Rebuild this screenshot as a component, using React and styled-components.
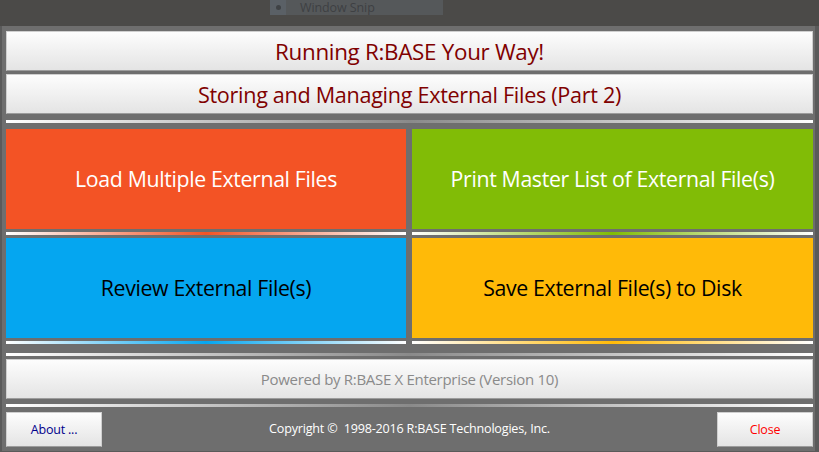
import React from "react";
import styled, { createGlobalStyle } from "styled-components";

const Global = createGlobalStyle`
  html, body {
    margin: 0;
    padding: 0;
    background: #6e6e6e;
    font-family: "Open Sans", "Noto Sans", sans-serif;
  }
`;

const Window = styled.div`
  position: relative;
  width: 819px;
  height: 452px;
  background: #6e6e6e;
  box-sizing: border-box;
  display: flex;
  flex-direction: column;
  overflow: hidden;
`;

const TitleStrip = styled.div`
  height: 26px;
  flex: none;
  background: #4b4a48;
`;

const GhostTip = styled.div`
  position: absolute;
  left: 270px;
  top: 0;
  width: 173px;
  height: 15px;
  background: #55585a;
  display: flex;
  align-items: center;
  gap: 14px;
  font-size: 12.5px;
  color: #3e4043;
  padding-left: 8px;
  box-sizing: border-box;
  letter-spacing: -0.1px;
`;

const GhostIcon = styled.span`
  width: 16px;
  height: 15px;
  margin-left: -8px;
  background: #5a6066;
  display: flex;
  align-items: center;
  justify-content: center;

  &::after {
    content: "";
    width: 5px;
    height: 5px;
    border-radius: 50%;
    background: #3f4245;
  }
`;

const Body = styled.div`
  flex: 1;
  display: flex;
  flex-direction: column;
  padding: 5px 0 0 0;
  border-left: 2px solid #5a5a5a;
  border-right: 4px solid #5a5a5a;
  border-bottom: 1px solid #5a5a5a;
  box-sizing: border-box;
`;

const Inner = styled.div`
  padding: 0 2px 0 4px;
  display: flex;
  flex-direction: column;
`;

const Bar = styled.div`
  height: 38px;
  display: flex;
  align-items: center;
  justify-content: center;
  background: linear-gradient(#fdfdfd, #e4e4e4);
  border: 1px solid #cfcfcf;
  border-bottom-color: #9c9c9c;
  font-size: ${(p) => p.$size || 21.6}px;
  color: ${(p) => p.$color || "#800000"};
  margin-top: ${(p) => p.$top || 0}px;
  letter-spacing: ${(p) => p.$ls || "-0.3px"};
`;

const Rule = styled.div`
  height: ${(p) => p.$h || 3}px;
  margin-top: ${(p) => p.$top || 0}px;
  background: linear-gradient(
    to right,
    #ffffff 0%,
    ${(p) => p.$mid || "#8a8a8a"} 50%,
    #ffffff 100%
  );
`;

const Grid = styled.div`
  display: grid;
  grid-template-columns: 400px 401px;
  column-gap: 6px;
  margin-top: 6px;
`;

const Cell = styled.div`
  display: flex;
  flex-direction: column;
  margin-bottom: 3px;
`;

const Tile = styled.div`
  height: 100px;
  background: ${(p) => p.$bg};
  color: ${(p) => p.$fg};
  display: flex;
  align-items: center;
  justify-content: center;
  padding-bottom: 2px;
  box-sizing: border-box;
  font-size: 21.3px;
  letter-spacing: -0.35px;
`;

const Footer = styled.div`
  display: flex;
  align-items: center;
  justify-content: space-between;
  margin-top: 5px;
`;

const SmallButton = styled.div`
  width: 94px;
  height: 33px;
  display: flex;
  align-items: center;
  justify-content: center;
  background: linear-gradient(#fdfdfd, #e4e4e4);
  border: 1px solid #cfcfcf;
  border-bottom-color: #9c9c9c;
  font-size: 12.5px;
  letter-spacing: -0.2px;
  color: ${(p) => p.$color};
`;

const Copyright = styled.div`
  color: #ffffff;
  font-size: 12.6px;
  letter-spacing: -0.2px;
  padding-bottom: 3px;
`;

const tiles = [
  { label: "Load Multiple External Files", bg: "#f35325", fg: "#ffffff" },
  { label: "Print Master List of External File(s)", bg: "#81bc06", fg: "#ffffff" },
  { label: "Review External File(s)", bg: "#05a6f0", fg: "#000000" },
  { label: "Save External File(s) to Disk", bg: "#ffba08", fg: "#000000" },
];

export default function App() {
  return (
    <>
      <Global />
      <Window>
        <TitleStrip />
        <GhostTip>
          <GhostIcon />
          Window Snip
        </GhostTip>
        <Body>
          <Inner>
            <Bar $size={22.4}>Running R:BASE Your Way!</Bar>
            <Bar $top={3}>Storing and Managing External Files (Part 2)</Bar>
            <Rule $top={6} />
            <Grid>
              {tiles.map((t) => (
                <Cell key={t.label}>
                  <Tile $bg={t.bg} $fg={t.fg}>
                    {t.label}
                  </Tile>
                  <Rule $top={3} $mid={t.bg} />
                </Cell>
              ))}
            </Grid>
            <Rule $top={6} />
            <Bar $top={3} $size={15} $color="#8a8a8a" $ls="-0.3px">
              Powered by R:BASE X Enterprise (Version 10)
            </Bar>
            <Rule $top={5} />
            <Footer>
              <SmallButton $color="#00008b">About ...</SmallButton>
              <Copyright>Copyright ©&nbsp; 1998-2016 R:BASE Technologies, Inc.</Copyright>
              <SmallButton $color="#ff0000">Close</SmallButton>
            </Footer>
          </Inner>
        </Body>
      </Window>
    </>
  );
}
